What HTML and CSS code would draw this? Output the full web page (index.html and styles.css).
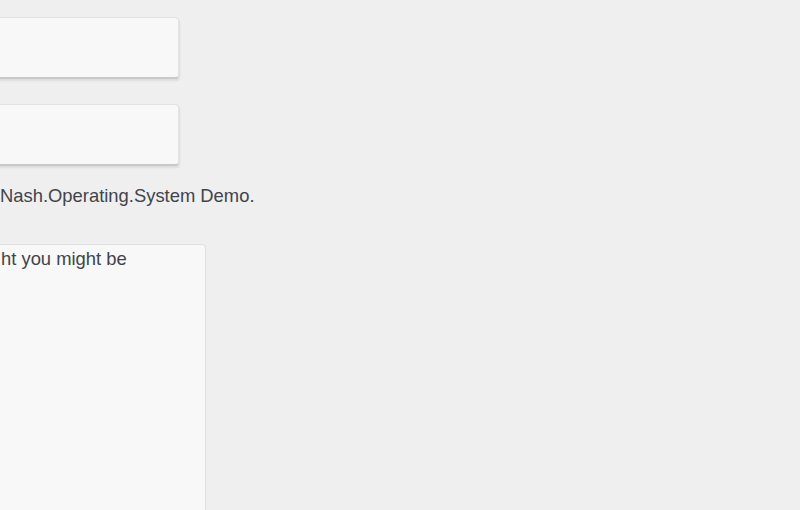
FILE: index.html
```html
<!DOCTYPE html>
<html>
<head>
<meta charset="utf-8">
<link rel="stylesheet" href="styles.css">
</head>
<body>
<div class="page">
  <div class="field"></div>
  <div class="field"></div>
  <p class="intro">Nash.Operating.System Demo.</p>
  <div class="panel">
    <p class="panel-text">ht you might be</p>
  </div>
</div>
</body>
</html>
```
FILE: styles.css
```css
html, body {
  margin: 0;
  padding: 0;
  background: #efefef;
  overflow: hidden;
  height: 510px;
}
.page {
  display: flex;
  flex-direction: column;
  align-items: flex-start;
  padding-top: 17px;
  font-family: "Liberation Sans", Arial, sans-serif;
  font-size: 18.4px;
  line-height: 20px;
  color: #41444a;
}
.field {
  box-sizing: border-box;
  margin-left: -200px;
  width: 379px;
  height: 62px;
  background: #f8f8f8;
  border: 1px solid #e2e2e2;
  border-bottom: 2px solid #c9c9c9;
  border-radius: 4px;
  box-shadow: 1px 2px 2px rgba(0, 0, 0, 0.08);
}
.field + .field {
  margin-top: 25px;
}
.intro {
  margin: 20px 0 0 0;
}
.panel {
  box-sizing: border-box;
  margin-top: 38px;
  margin-left: -300px;
  width: 506px;
  height: 267px;
  padding: 4px 0 0 300px;
  background: #f8f8f8;
  border: 1px solid #e0e0e0;
  border-bottom: none;
  border-radius: 4px 4px 0 0;
}
.panel-text {
  margin: 0;
}
```
